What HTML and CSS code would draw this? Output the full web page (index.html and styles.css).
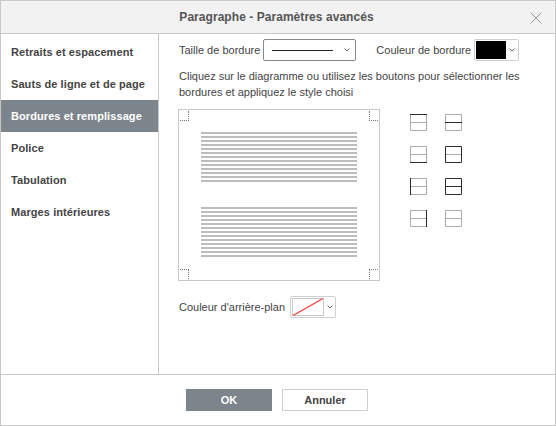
FILE: index.html
```html
<!DOCTYPE html>
<html lang="fr">
<head>
<meta charset="utf-8">
<title>Paragraphe - Paramètres avancés</title>
<link rel="stylesheet" href="styles.css">
</head>
<body>
<div class="dialog">
  <header class="title">
    <span>Paragraphe - Paramètres avancés</span>
    <svg class="close" width="12" height="12" viewBox="0 0 12 12"><path d="M.5.5l11 11M11.500.5l-11 11" stroke="#9a9a9a" fill="none"/></svg>
  </header>
  <div class="main">
    <nav class="side">
      <div class="tab">Retraits et espacement</div>
      <div class="tab">Sauts de ligne et de page</div>
      <div class="tab active">Bordures et remplissage</div>
      <div class="tab">Police</div>
      <div class="tab">Tabulation</div>
      <div class="tab">Marges intérieures</div>
    </nav>
    <section class="content">
      <div class="row-top">
        <label class="lbl">Taille de bordure</label>
        <div class="combo">
          <span class="rule"></span>
          <svg class="caret" width="6" height="4" viewBox="0 0 6 4"><path d="M.5.5L3 3 5.500.5" stroke="#666" fill="none"/></svg>
        </div>
        <label class="lbl color-lbl">Couleur de bordure</label>
        <div class="colorbtn">
          <span class="swatch"></span>
          <svg class="caret" width="6" height="4" viewBox="0 0 6 4"><path d="M.5.5L3 3 5.500.5" stroke="#666" fill="none"/></svg>
        </div>
      </div>
      <p class="desc">Cliquez sur le diagramme ou utilisez les boutons pour sélectionner les bordures et appliquez le style choisi</p>
      <div class="diagram-row">
        <div class="preview">
          <i class="corner tl"></i><i class="corner tr"></i><i class="corner bl"></i><i class="corner br"></i>
          <div class="para"><b></b><b></b><b></b><b></b><b></b><b></b><b></b><b></b><b></b><b></b><b></b><b></b><b></b></div>
          <div class="para"><b></b><b></b><b></b><b></b><b></b><b></b><b></b><b></b><b></b><b></b><b></b><b></b><b></b></div>
        </div>
        <div class="borders">
          <svg viewBox="0 0 17 17" width="17" height="17"><path class="g" d="M.5 1v15.500h16V1M1 8.500h15"/><path class="k" d="M0 .5h17"/></svg>
          <svg viewBox="0 0 17 17" width="17" height="17"><path class="g" d="M.5 8v-7.500h16V8M.5 9v7.500h16V9"/><path class="k" d="M0 8.500h17"/></svg>
          <svg viewBox="0 0 17 17" width="17" height="17"><path class="g" d="M.5 16V.5h16V16M1 8.500h15"/><path class="k" d="M0 16.500h17"/></svg>
          <svg viewBox="0 0 17 17" width="17" height="17"><path class="g" d="M1 8.500h15"/><path class="k" d="M.5.5h16v16H.5z"/></svg>
          <svg viewBox="0 0 17 17" width="17" height="17"><path class="g" d="M1 .5h15.500v16H1M1 8.500h15"/><path class="k" d="M.5 0v17"/></svg>
          <svg viewBox="0 0 17 17" width="17" height="17"><path class="k" d="M.5.5h16v16H.5zM1 8.500h15"/></svg>
          <svg viewBox="0 0 17 17" width="17" height="17"><path class="g" d="M16 .5H.5v16H16M1 8.500h15"/><path class="k" d="M16.500 0v17"/></svg>
          <svg viewBox="0 0 17 17" width="17" height="17"><path class="g" d="M.5.5h16v16H.5zM1 8.500h15"/></svg>
        </div>
      </div>
      <div class="row-bg">
        <label class="lbl">Couleur d'arrière-plan</label>
        <div class="colorbtn bgbtn">
          <svg class="nofill" width="32" height="18" viewBox="0 0 32 18"><rect x=".5" y=".5" width="31" height="17" fill="#fff" stroke="#c8c8c8"/><path d="M1 17.500L31 .5" stroke="#ff3333" stroke-width="1.200" fill="none"/></svg>
          <svg class="caret" width="6" height="4" viewBox="0 0 6 4"><path d="M.5.5L3 3 5.500.5" stroke="#666" fill="none"/></svg>
        </div>
      </div>
    </section>
  </div>
  <footer class="foot">
    <button class="btn primary">OK</button>
    <button class="btn">Annuler</button>
  </footer>
</div>
</body>
</html>
```
FILE: styles.css
```css
* { box-sizing: border-box; }
html, body { margin: 0; padding: 0; background: #fff; }
body { width: 556px; height: 426px; font-family: "Liberation Sans", Arial, sans-serif; font-size: 11px; color: #444; }
.dialog { width: 556px; height: 426px; border: 1px solid #c8c8c8; display: flex; flex-direction: column; }
.title { height: 33px; flex: none; background: #f2f2f2; border-bottom: 1px solid #c8c8c8; display: flex; align-items: center; justify-content: center; position: relative; padding-right: 3px; font-size: 12px; font-weight: 700; color: #555; letter-spacing: .05px; }
.close { position: absolute; right: 13px; top: 11px; }
.main { flex: 1; display: flex; min-height: 0; }
.side { width: 158px; flex: none; border-right: 1px solid #c8c8c8; padding-top: 2px; }
.tab { height: 32px; padding-left: 10px; line-height: 32px; font-weight: 700; font-size: 11px; letter-spacing: .08px; color: #444; white-space: nowrap; }
.tab.active { background: #7d858c; color: #fff; }
.content { flex: 1; padding: 5px 0 0 19px; }
.row-top { display: flex; align-items: center; height: 22px; margin-left: 1px; }
.lbl { white-space: nowrap; }
.combo { width: 93px; height: 22px; margin-left: 3px; border: 1px solid #888; border-radius: 2px; display: flex; align-items: center; justify-content: space-between; padding: 0 5px 0 8px; }
.rule { width: 61px; height: 1px; background: #222; }
.color-lbl { margin-left: 20px; }
.colorbtn { display: flex; align-items: center; width: 45px; height: 22px; margin-left: 3px; border: 1px solid #cfcfcf; border-radius: 2px; padding: 1px; }
.swatch { width: 30px; height: 18px; background: #000; }
.colorbtn .caret { margin-left: 3px; }
.desc { margin: 7px 0 0 1px; width: 350px; line-height: 16px; }
.diagram-row { display: flex; margin-top: 9px; }
.preview { width: 202px; height: 172px; border: 1px solid #c8c8c8; position: relative; padding: 22px 22px 0; }
.corner { position: absolute; width: 9px; height: 10px; border: 0 dotted #777; }
.tl { left: 1px; top: 1px; border-right-width: 1px; border-bottom-width: 1px; }
.tr { right: 1px; top: 1px; border-left-width: 1px; border-bottom-width: 1px; }
.bl { left: 1px; bottom: 1px; border-right-width: 1px; border-top-width: 1px; }
.br { right: 1px; bottom: 1px; border-left-width: 1px; border-top-width: 1px; }
.para { display: flex; flex-direction: column; gap: 2px; margin-bottom: 25px; }
.para b { display: block; height: 2px; background: #bdbdbd; }
.borders { display: grid; grid-template-columns: 17px 17px; grid-auto-rows: 17px; column-gap: 18px; row-gap: 15px; margin: 5px 0 0 30px; }
.borders svg { display: block; }
.g, .k { fill: none; stroke-width: 1; }
.g { stroke: #ababab; }
.k { stroke: #2b2b2b; }
.row-bg { display: flex; align-items: center; margin: 15px 0 0 1px; }
.bgbtn { width: 46px; height: 22px; margin-left: 5px; padding: 0 0 0 1px; }
.nofill { display: block; flex: none; }
.bgbtn .caret { margin-left: 3px; }
.foot { height: 51px; flex: none; border-top: 1px solid #c8c8c8; display: flex; justify-content: center; align-items: center; gap: 10px; padding: 0 2px 1px 0; }
.btn { width: 86px; height: 22px; border: 1px solid #cfcfcf; background: #fff; font-family: inherit; font-size: 11px; font-weight: 700; color: #444; padding: 0; }
.btn.primary { background: #7d858c; border-color: #7d858c; color: #fff; }
```
